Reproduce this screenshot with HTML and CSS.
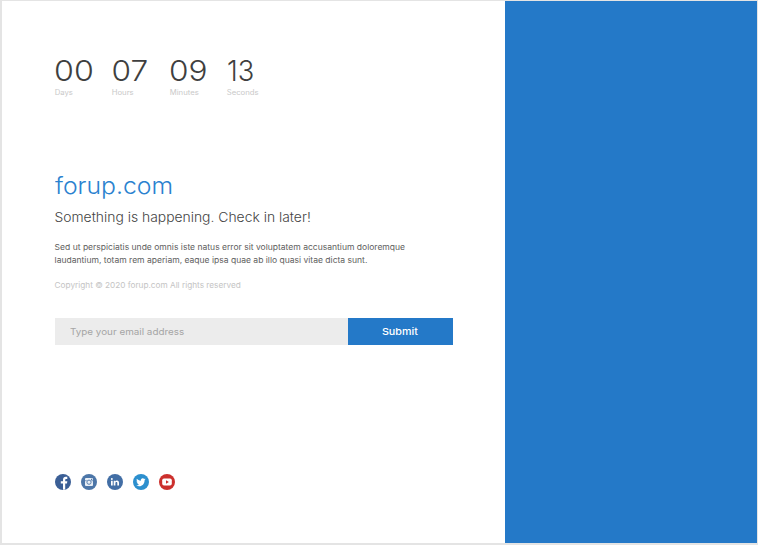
FILE: index.html
```html
<!DOCTYPE html>
<html lang="en">
<head>
<meta charset="utf-8">
<title>forup.com</title>
<link rel="stylesheet" href="styles.css">
</head>
<body>
<main class="page">
  <section class="content">
    <div class="countdown">
      <div class="unit"><b class="zeros">00</b><span>Days</span></div>
      <div class="unit"><b class="hours">07</b><span>Hours</span></div>
      <div class="unit"><b class="minutes">09</b><span>Minutes</span></div>
      <div class="unit"><b class="seconds">13</b><span>Seconds</span></div>
    </div>
    <h1>forup.com</h1>
    <h2>Something is happening. Check in later!</h2>
    <p class="about"><span class="line">Sed ut perspiciatis unde omnis iste natus error sit voluptatem accusantium doloremque</span> <span class="line">laudantium, totam rem aperiam, eaque ipsa quae ab illo quasi vitae dicta sunt.</span></p>
    <p class="copyright"><span class="line">Copyright © 2020 forup.com All rights reserved</span></p>
    <form class="subscribe">
      <label class="field"><span>Type your email address</span></label>
      <button type="button"><span>Submit</span></button>
    </form>
    <nav class="social">
      <svg viewBox="0 0 16 16"><circle cx="8" cy="8" r="8" fill="#3b5f96"/><path d="M8 15.800V9.500H5.800V7.200H8V5.800c0-2 1.100-3 2.800-3h1.500v2.100h-1c-.8 0-1.100.4-1.100 1.100v1.200h2.100L12 9.500h-1.800v6z" fill="#fff"/></svg>
      <svg viewBox="0 0 16 16"><circle cx="8" cy="8" r="8" fill="#4c76a8"/><rect x="4" y="4" width="8" height="8" rx="1" fill="#e8eef5"/><path d="M4 6.700h1.800M10.200 6.700H12" stroke="#4c76a8" stroke-width=".7"/><circle cx="8" cy="8.200" r="2.100" fill="#e8eef5" stroke="#4c76a8" stroke-width=".9"/><path d="M10 4.800h1.200v1.100H10z" fill="#4c76a8"/></svg>
      <svg viewBox="0 0 16 16"><circle cx="8" cy="8" r="8" fill="#426ea5"/><path d="M4 6.700h1.700v4.800H4zM6.700 6.700h1.600v.7c.4-.6.9-.9 1.700-.9 1.500 0 2 .9 2 2.400v2.600h-1.700V9.100c0-.8-.2-1.200-.8-1.200s-1.100.4-1.100 1.200v2.400H6.700z" fill="#fff"/><circle cx="4.850" cy="5" r=".95" fill="#fff"/></svg>
      <svg viewBox="0 0 16 16"><circle cx="8" cy="8" r="8" fill="#2c8fce"/><path d="M12.600 5.200l-1 .3.8-1-1.200.4a2 2 0 0 0-3.400 1.800C6.100 6.600 4.800 5.800 3.900 4.700c-.6 1-.2 2.100.6 2.700l-.9-.2c0 1 .7 1.700 1.600 1.900l-.9.1c.3.800 1 1.300 1.900 1.300-.8.700-1.800.9-2.900.8 3.600 2.200 8.300.2 8.300-5.100z" fill="#fff"/></svg>
      <svg viewBox="0 0 16 16"><circle cx="8" cy="8" r="8" fill="#cc302d"/><rect x="3.200" y="4.500" width="9.600" height="7" rx="1.800" fill="#fff"/><path d="M7 6.300v3.400L9.900 8z" fill="#cc302d"/></svg>
    </nav>
  </section>
  <aside class="panel"></aside>
</main>
</body>
</html>
```

FILE: styles.css
```css
* { box-sizing: border-box; margin: 0; }
body { width: 758px; height: 545px; overflow: hidden; background: #e4e4e4; font-family: Inter, "Liberation Sans", sans-serif; }
.page { display: flex; height: 545px; padding: 1px 1px 2px 2px; }
.content { width: 503px; background: #fff; padding: 53px 0 0 52.500px; }
.panel { flex: 1; background: #2479c8; }
.countdown { display: flex; height: 48px; }
.unit { width: 57.600px; white-space: nowrap; }
.unit b, .unit span { display: block; width: max-content; transform-origin: left; }
.unit b { font-size: 29px; font-weight: 300; line-height: 34px; color: #3f3f3f; transform: translateX(-1px) scaleX(1.110); }
.unit .hours { transform: translateX(-.5px) scaleX(1.090); }
.unit .minutes { transform: translateX(-1px) scaleX(1.090); }
.unit .seconds { transform: scaleX(.940); }
.unit span { font-size: 7.300px; line-height: 9px; color: #c9c9c9; transform: translateX(-.3px) scaleX(1.060); }
h1, h2 { width: max-content; font-weight: 300; transform-origin: left; }
h1 { margin-top: 69px; font-size: 23px; line-height: 30px; color: #2b82cf; transform: scaleX(1.077); }
h2 { margin-top: 7px; font-size: 13px; line-height: 18px; color: #444; transform: translateX(-.5px) scaleX(1.068); }
.line { display: block; width: max-content; transform: translateX(-.4px) scaleX(1.066); transform-origin: left; }
.about { margin-top: 15px; font-size: 8px; line-height: 13px; color: #606060; }
.copyright { margin-top: 12px; font-size: 8px; line-height: 13px; color: #c4c4c4; }
.copyright .line { transform: translateX(-.4px) scaleX(1.028); }
.subscribe { display: flex; width: 398px; height: 27px; margin-top: 26px; }
.field { flex: 1; padding-left: 15px; background: #ececec; color: #a5a5a5; font-size: 9px; line-height: 27px; }
.field span, button span { display: inline-block; transform: scaleX(1.095); transform-origin: left; }
button { width: 105px; border: 0; padding: 0; background: #2479c8; color: #fff; font: 500 9.500px/27px Inter, sans-serif; }
button span { transform-origin: center; transform: scaleX(1.130); }
.social { display: flex; gap: 10px; margin-top: 129px; }
.social svg { width: 16px; height: 16px; }
```
